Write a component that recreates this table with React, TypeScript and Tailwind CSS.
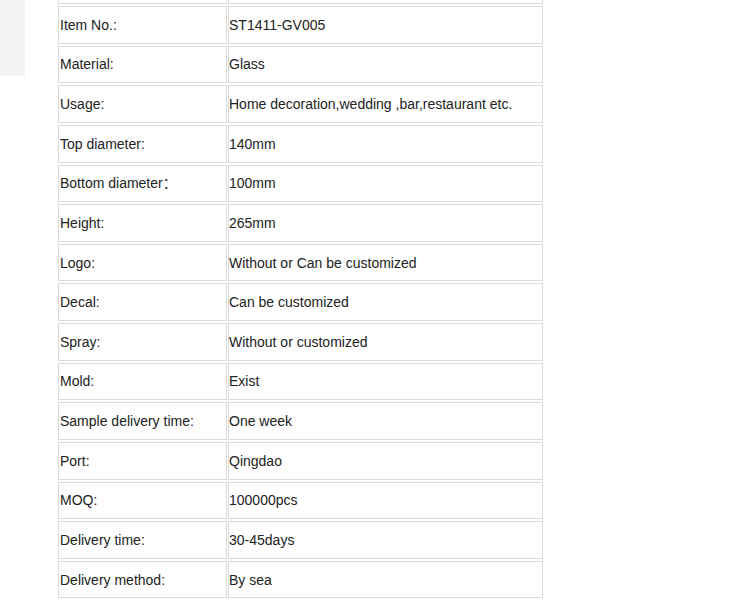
const rows: [string, string][] = [
  ['', ''],
  ['Item No.:', 'ST1411-GV005'],
  ['Material:', 'Glass'],
  ['Usage:', 'Home decoration,wedding ,bar,restaurant etc.'],
  ['Top diameter:', '140mm'],
  ['Bottom diameter：', '100mm'],
  ['Height:', '265mm'],
  ['Logo:', 'Without or Can be customized'],
  ['Decal:', 'Can be customized'],
  ['Spray:', 'Without or customized'],
  ['Mold:', 'Exist'],
  ['Sample delivery time:', 'One week'],
  ['Port:', 'Qingdao'],
  ['MOQ:', '100000pcs'],
  ['Delivery time:', '30-45days'],
  ['Delivery method:', 'By sea'],
];

export default function App() {
  return (
    <div className="relative h-[600px] w-[739px] overflow-hidden bg-white font-['Liberation_Sans',Arial,'Noto_Sans_CJK_SC',sans-serif] text-[14px] text-[#222]">
      <div className="absolute left-0 top-0 h-[76px] w-[25px] bg-[#f4f4f4]" />
      <div className="ml-[58px] mt-[-33.6px] grid grid-cols-[169px_315px] gap-x-[1px] gap-y-[2px]">
        {rows.map(([label, value], i) => (
          <div key={i} className="contents">
            <div className="flex h-[37.64px] items-center border border-[#dadada] pl-[1px] pt-[1px]">{label}</div>
            <div className="flex h-[37.64px] items-center border border-[#dadada] pt-[1px]">{value}</div>
          </div>
        ))}
      </div>
    </div>
  );
}
